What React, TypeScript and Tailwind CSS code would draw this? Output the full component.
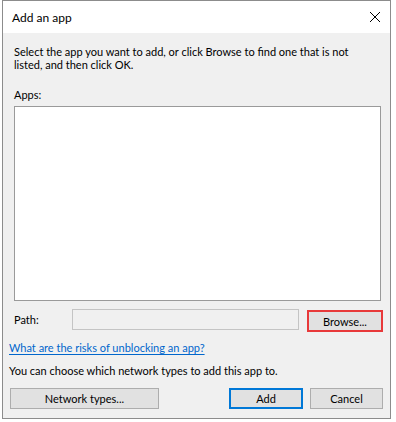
const Btn = ({ label, className = '' }: { label: string; className?: string }) => (
  <button
    type="button"
    className={`flex h-[21px] items-center justify-center border bg-[#e1e1e1] text-[11px] leading-[13px] text-black ${className}`}
  >
    {label}
  </button>
)

const App = () => {
  return (
    <div className="h-[422px] w-[396px] bg-white font-['Lato',sans-serif] text-[11px] leading-[13px] text-black">
      <div className="ml-[2px] flex h-[419px] w-[389px] flex-col border border-[#8c8c8c]">
        {/* title bar */}
        <div className="flex h-[32px] shrink-0 items-center justify-between bg-white pl-[9px] pr-[7px]">
          <span className="text-[12px]">Add an app</span>
          <svg width="14" height="14" viewBox="0 0 14 14" className="mr-[1px]">
            <path d="M2 2 L12 12 M12 2 L2 12" stroke="#000" strokeWidth="1" fill="none" />
          </svg>
        </div>

        <div className="flex flex-1 flex-col bg-[#f0f0f0]">
          <p className="ml-[11px] mt-[12px] whitespace-nowrap">
            Select the app you want to add, or click Browse to find one that is not
            <br />
            listed, and then click OK.
          </p>

          <p className="ml-[11px] mt-[17px]">Apps:</p>
          <div className="ml-[11px] mt-[5px] h-[195px] w-[367px] border border-[#9a9a9a] bg-white" />

          <div className="mt-[8px] flex items-start">
            <span className="ml-[11px] mt-[4px] w-[58px]">Path:</span>
            <div className="h-[21px] w-[227px] border border-[#c4c4c4] bg-[#f0f0f0]" />
            <Btn label="Browse..." className="ml-[8px] mt-[1px] h-[22px] w-[76px] border-2 border-[#e8393a]" />
          </div>

          <a className="ml-[6px] mt-[9px] self-start text-[#0066cc] underline underline-offset-2">
            What are the risks of unblocking an app?
          </a>

          <p className="ml-[6px] mt-[10px]">You can choose which network types to add this app to.</p>

          <div className="mt-[11px] flex items-center px-[7px]">
            <Btn label="Network types..." className="w-[149px] border-[#adadad]" />
            <div className="flex-1" />
            <Btn label="Add" className="w-[74px] border-2 border-[#0078d7]" />
            <Btn label="Cancel" className="ml-[7px] w-[73px] border-[#adadad]" />
          </div>
        </div>
      </div>
    </div>
  )
}

export default App
